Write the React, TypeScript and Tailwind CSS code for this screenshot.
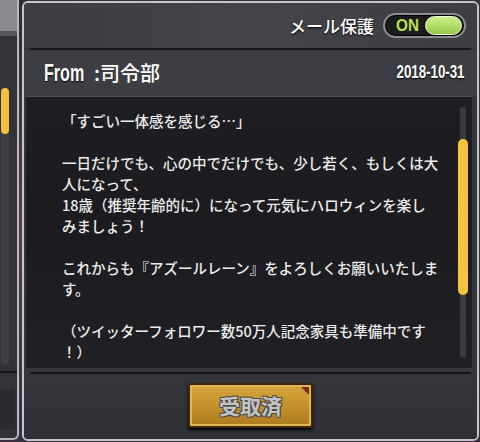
const bodyLines = [
  '「すごい一体感を感じる…」',
  '',
  '一日だけでも、心の中でだけでも、少し若く、もしくは大',
  '人になって、',
  '18歳（推奨年齢的に）になって元気にハロウィンを楽し',
  'みましょう！',
  '',
  'これからも『アズールレーン』をよろしくお願いいたしま',
  'す。',
  '',
  '（ツイッターフォロワー数50万人記念家具も準備中です',
  '！）',
];

const jp = "font-['Noto_Sans_CJK_JP','Noto_Sans',sans-serif]";
const narrow = "font-['Liberation_Sans',Arial,sans-serif]";

const Toggle = () => (
  <div className="flex items-center w-[83px] h-[25px] rounded-full bg-[#1c1c1e] border-2 border-[#8e8e92] shadow-[inset_0_0_0_1px_#000] pl-[11px] pr-[2px] gap-[5px]">
    <span className={`${narrow} inline-block w-[24px] text-[17px] font-bold text-[#b6e04c] leading-none scale-x-[0.9] origin-left`}>
      ON
    </span>
    <div className="flex-1 h-[19px] rounded-full bg-gradient-to-b from-[#cdf088] to-[#96c846] border border-[#f2f8e4] shadow-[0_0_2px_#000]" />
  </div>
);

const LeftSliver = () => (
  <div className="w-[19px] h-[440px] flex flex-col border-r-2 border-b-2 border-[#b9b9bc] rounded-br-[6px] bg-[#323338] overflow-hidden">
    <div className="h-[36px] bg-[#8b8b8e] border-b-[5px] border-[#55565a]" />
    <div className="flex-1 flex flex-col">
      <div className="mt-[52px] ml-[1px] w-[8px] h-[276px] rounded-full bg-[#3e3f43] flex flex-col">
        <div className="h-[46px] rounded-full bg-[#f4c13c]" />
      </div>
      <div className="mt-[7px] h-[2px] bg-[#17171a]" />
      <div className="mt-[16px] mr-[2px] h-[40px] bg-[#2a2b2f]" />
    </div>
  </div>
);

export default function App() {
  return (
    <div className={`w-[480px] h-[442px] overflow-hidden flex bg-[#3a2f3a] ${jp}`}>
      <LeftSliver />
      <div className="w-[3px] bg-gradient-to-b from-[#2b2b36] via-[#5a3a48] to-[#2d3446]" />
      <div className="mt-[1px] w-[457px] h-[440px] flex flex-col border-2 border-[#c6c6c9] rounded-[6px] bg-[#36373c] overflow-hidden">
        <div className="h-[45px] flex items-center justify-end gap-[9px] pr-[11px] bg-gradient-to-r from-[#3c3d42] via-[#444449] to-[#3d3e43]">
          <span className="text-[17px] text-white font-medium leading-none [text-shadow:0_1px_2px_#000]">
            メール保護
          </span>
          <Toggle />
        </div>
        <div className="mx-[6px] h-[2px] bg-[#161618]" />
        <div className="h-[46px] flex items-center justify-between pl-[20px] pr-[12px] bg-[#3d3e43]">
          <div className="flex items-center text-white leading-none">
            <span className={`${narrow} inline-block w-[40px] text-[23px] font-bold scale-x-[0.7] origin-left [text-shadow:0_1px_2px_#000]`}>
              From
            </span>
            <span className="ml-[10px] text-[20px] font-medium">:司令部</span>
          </div>
          <span className={`${narrow} inline-block text-[17.5px] font-bold text-white leading-none scale-x-[0.76] origin-right [text-shadow:0_1px_2px_#000]`}>
            2018-10-31
          </span>
        </div>
        <div className="ml-[2px] mr-[5px] h-[272px] flex bg-gradient-to-b from-[#1e1e22] via-[#1c1c20] to-[#202025] border-t border-[#4c4d60]">
          <div className="flex-1 pl-[36px] pt-[13px] text-[14.5px] leading-[21px] text-[#ececec] font-medium whitespace-nowrap">
            {bodyLines.map((line, i) => (
              <div key={i} className="h-[21px]">
                {line}
              </div>
            ))}
          </div>
          <div className="w-[14px] mr-[2px] pt-[10px] pb-[10px] flex justify-center">
            <div className="relative w-[6px] bg-[#3b3b3f] rounded-sm">
              <div className="absolute left-[-2px] top-[32px] w-[10px] h-[156px] rounded-full bg-[#f5c23e]" />
            </div>
          </div>
        </div>
        <div className="mt-[4px] mx-[6px] h-[2px] bg-[#141416]" />
        <div className="flex-1 flex justify-center items-start pt-[9px] bg-gradient-to-b from-[#34353b] to-[#2f3036]">
          <button className="relative w-[125px] h-[45px] rounded-[3px] border-2 border-[#3a2608] bg-gradient-to-b from-[#d4a43a] via-[#c4922c] to-[#ab7a1e] shadow-[inset_0_0_0_2px_#e0b654,0_2px_3px_#000] flex items-center justify-center">
            <span className="absolute top-[2px] right-[2px] w-0 h-0 border-t-[8px] border-l-[8px] border-t-[#7a2a14] border-l-transparent" />
            <span className="text-[21px] font-bold text-[#c4c4c4] leading-none [text-shadow:-1px_-1px_0_#4a4a4a,1px_-1px_0_#4a4a4a,-1px_1px_0_#4a4a4a,1px_1px_0_#4a4a4a]">
              受取済
            </span>
          </button>
        </div>
      </div>
    </div>
  );
}
